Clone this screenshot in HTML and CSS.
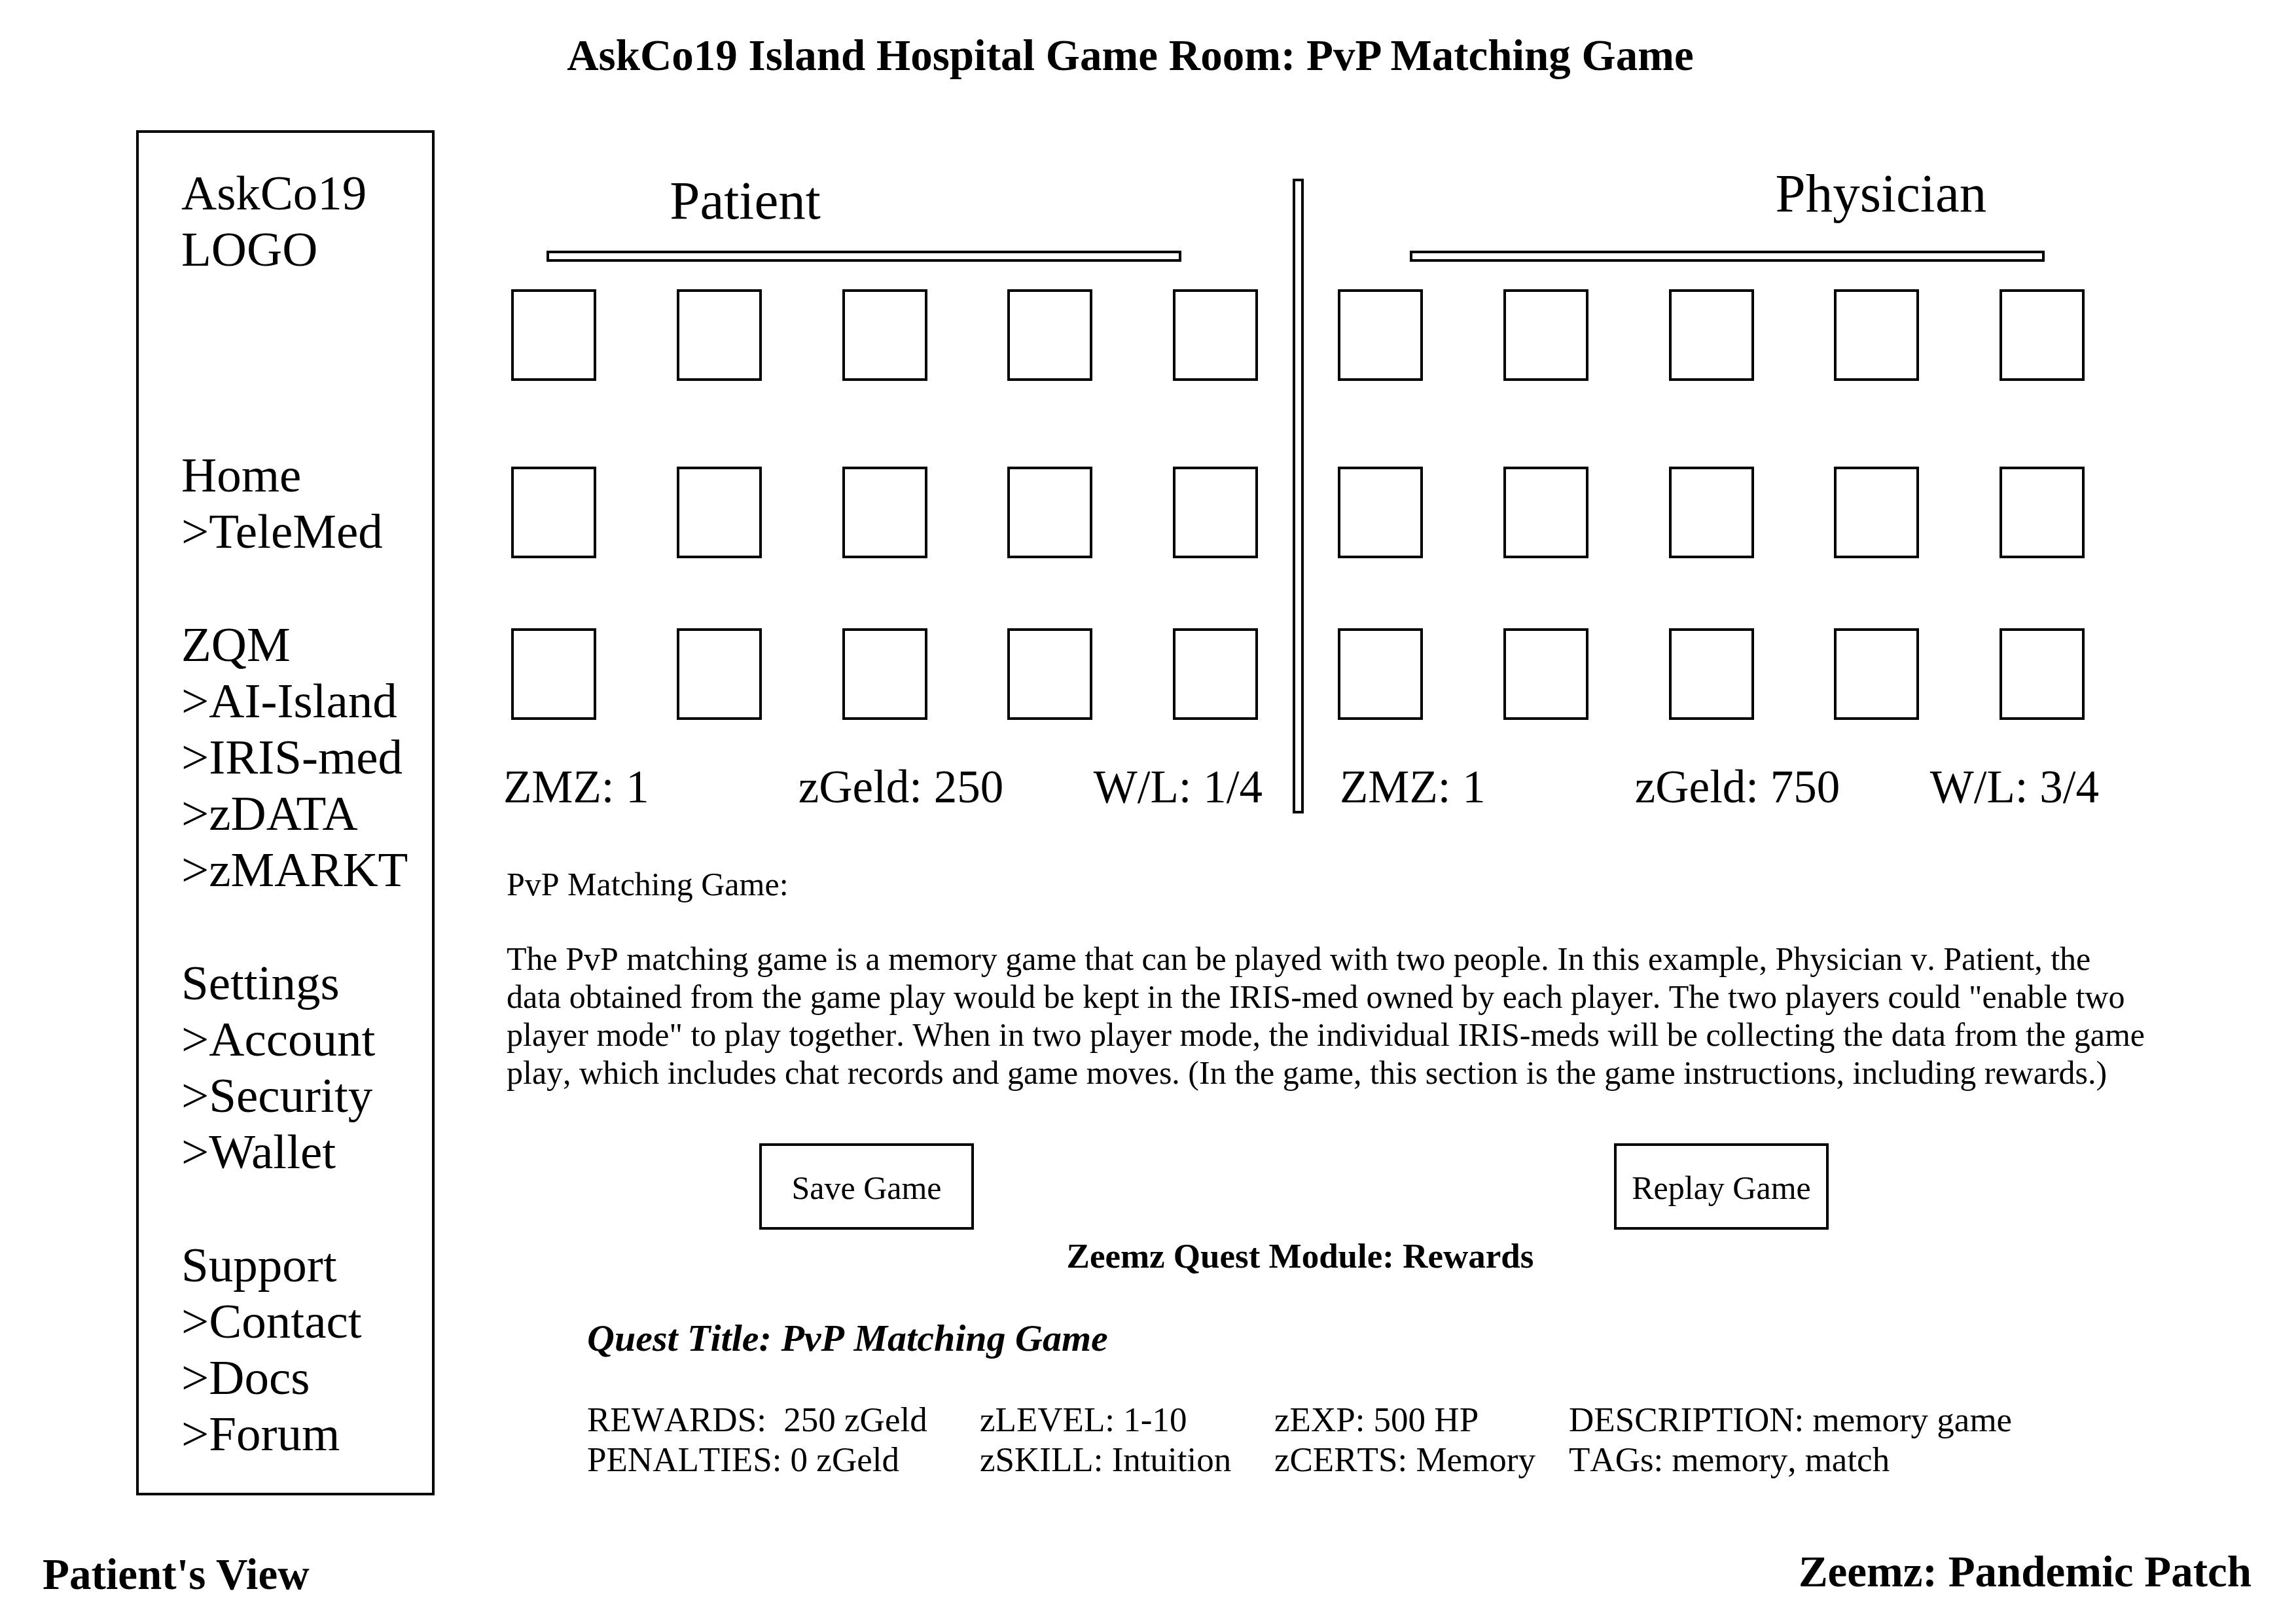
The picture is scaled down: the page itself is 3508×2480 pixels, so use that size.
FILE: index.html
```html
<!DOCTYPE html>
<html lang="en">
<head>
  <meta charset="utf-8">
  <meta name="viewport" content="width=device-width, initial-scale=1">
  <title>AskCo19 Island Hospital Game Room</title>
  <link rel="stylesheet" href="styles.css">
</head>
<body>
  <header class="page-header">
    <h1 class="page-title">AskCo19 Island Hospital Game Room: PvP Matching Game</h1>
  </header>

  <div class="layout">
    <aside class="sidebar">
      <div class="logo">AskCo19<br>LOGO</div>
      <nav class="menu">
        <ul class="menu-group">
          <li><a href="#home">Home</a></li>
          <li><a href="#telemed">&gt;TeleMed</a></li>
        </ul>
        <ul class="menu-group">
          <li><a href="#zqm">ZQM</a></li>
          <li><a href="#ai-island">&gt;AI-Island</a></li>
          <li><a href="#iris-med">&gt;IRIS-med</a></li>
          <li><a href="#zdata">&gt;zDATA</a></li>
          <li><a href="#zmarkt">&gt;zMARKT</a></li>
        </ul>
        <ul class="menu-group">
          <li><a href="#settings">Settings</a></li>
          <li><a href="#account">&gt;Account</a></li>
          <li><a href="#security">&gt;Security</a></li>
          <li><a href="#wallet">&gt;Wallet</a></li>
        </ul>
        <ul class="menu-group">
          <li><a href="#support">Support</a></li>
          <li><a href="#contact">&gt;Contact</a></li>
          <li><a href="#docs">&gt;Docs</a></li>
          <li><a href="#forum">&gt;Forum</a></li>
        </ul>
      </nav>
    </aside>

    <main class="content">
      <section class="board">
        <div class="player player-patient">
          <h2 class="player-name">Patient</h2>
          <div class="player-rule"></div>
          <div class="cards">
            <button class="card" type="button"></button>
            <button class="card" type="button"></button>
            <button class="card" type="button"></button>
            <button class="card" type="button"></button>
            <button class="card" type="button"></button>
            <button class="card" type="button"></button>
            <button class="card" type="button"></button>
            <button class="card" type="button"></button>
            <button class="card" type="button"></button>
            <button class="card" type="button"></button>
            <button class="card" type="button"></button>
            <button class="card" type="button"></button>
            <button class="card" type="button"></button>
            <button class="card" type="button"></button>
            <button class="card" type="button"></button>
          </div>
          <div class="stats">
            <span>ZMZ: 1</span>
            <span>zGeld: 250</span>
            <span>W/L: 1/4</span>
          </div>
        </div>

        <div class="divider"></div>

        <div class="player player-physician">
          <h2 class="player-name">Physician</h2>
          <div class="player-rule"></div>
          <div class="cards">
            <button class="card" type="button"></button>
            <button class="card" type="button"></button>
            <button class="card" type="button"></button>
            <button class="card" type="button"></button>
            <button class="card" type="button"></button>
            <button class="card" type="button"></button>
            <button class="card" type="button"></button>
            <button class="card" type="button"></button>
            <button class="card" type="button"></button>
            <button class="card" type="button"></button>
            <button class="card" type="button"></button>
            <button class="card" type="button"></button>
            <button class="card" type="button"></button>
            <button class="card" type="button"></button>
            <button class="card" type="button"></button>
          </div>
          <div class="stats">
            <span>ZMZ: 1</span>
            <span>zGeld: 750</span>
            <span>W/L: 3/4</span>
          </div>
        </div>
      </section>

      <section class="instructions">
        <h2 class="instructions-title">PvP Matching Game:</h2>
        <p class="instructions-text">The PvP matching game is a memory game that can be played with two people. In this example, Physician v. Patient, the data obtained from the game play would be kept in the IRIS-med owned by each player. The two players could "enable two player mode" to play together. When in two player mode, the individual IRIS-meds will be collecting the data from the game play, which includes chat records and game moves. (In the game, this section is the game instructions, including rewards.)</p>
      </section>

      <div class="actions">
        <button class="action" type="button">Save Game</button>
        <button class="action" type="button">Replay Game</button>
      </div>

      <section class="quest">
        <h2 class="quest-module">Zeemz Quest Module: Rewards</h2>
        <h3 class="quest-title">Quest Title: PvP Matching Game</h3>
        <div class="quest-details">
          <span>REWARDS:  250 zGeld</span>
          <span>zLEVEL: 1-10</span>
          <span>zEXP: 500 HP</span>
          <span>DESCRIPTION: memory game</span>
          <span>PENALTIES: 0 zGeld</span>
          <span>zSKILL: Intuition</span>
          <span>zCERTS: Memory</span>
          <span>TAGs: memory, match</span>
        </div>
      </section>
    </main>
  </div>

  <footer class="page-footer">
    <p class="view-label">Patient's View</p>
    <p class="product-label">Zeemz: Pandemic Patch</p>
  </footer>
</body>
</html>
```
FILE: styles.css
```css
* {
  box-sizing: border-box;
}

body,
h1,
h2,
h3,
p,
ul {
  margin: 0;
  padding: 0;
}

body {
  background: #fff;
  color: #000;
  font-family: "Liberation Serif", "Times New Roman", serif;
}

h2,
h3 {
  font-weight: 400;
}

/* Header and footer */

.page-header {
  padding: 46px 54px 0 0;
}

.page-title {
  font-size: 67px;
  line-height: 76px;
  text-align: center;
}

.page-footer {
  display: flex;
  justify-content: space-between;
  padding: 78px 68px 36px 65px;
  font-size: 67px;
  font-weight: 700;
  line-height: 76px;
}

.view-label {
  padding-top: 4px;
}

/* Sidebar and content columns */

.layout {
  display: grid;
  grid-template-columns: 456px 1fr;
  column-gap: 105px;
  align-items: start;
  margin-top: 77px;
  padding: 0 222px 0 208px;
}

.sidebar {
  padding: 49px 0 47px 65px;
  border: 4px solid #000;
  font-size: 75px;
  line-height: 86px;
}

.menu {
  display: flex;
  flex-direction: column;
  gap: 87px;
  margin-top: 259px;
}

.menu-group {
  list-style: none;
}

.menu a {
  display: block;
  color: inherit;
  text-decoration: none;
}

.content {
  min-width: 0;
  padding-top: 48px;
}

/* Game board */

.board {
  display: grid;
  grid-template-columns: 1fr 17px 1fr;
  column-gap: 50px;
  margin-right: 88px;
}

.divider {
  margin-top: 26px;
  border: 4px solid #000;
}

.player-name {
  height: 136px;
  font-size: 83px;
  line-height: 96px;
}

.player-patient .player-name {
  padding: 11px 0 0 22%;
}

.player-physician .player-name {
  padding-left: 58%;
}

.player-rule {
  height: 17px;
  border: 4px solid #000;
}

.player-patient .player-rule {
  margin: 0 120px 0 66px;
}

.player-physician .player-rule {
  margin: 0 74px 0 112px;
}

.cards {
  display: grid;
  grid-template-columns: repeat(5, 130px);
  grid-template-rows: 271px 247px 140px;
  justify-content: space-between;
  align-items: start;
  margin-top: 42px;
}

.player-patient .cards {
  padding: 0 3px 0 12px;
}

.player-physician .cards {
  padding: 0 13px 0 2px;
}

.card {
  height: 140px;
  padding: 0;
  border: 4px solid #000;
  border-radius: 0;
  background: #fff;
}

.stats {
  display: grid;
  grid-template-columns: 39% 39% 1fr;
  margin-top: 61px;
  font-size: 71px;
  line-height: 82px;
  white-space: nowrap;
}

.player-physician .stats {
  margin-right: -5px;
  margin-left: 5px;
}

/* Instructions */

.instructions {
  margin-top: 79px;
  padding-left: 5px;
  font-size: 50px;
  font-kerning: none;
  line-height: 58px;
}

.instructions-title {
  font-size: 50px;
}

.instructions-text {
  margin-top: 56px;
}

.actions {
  display: flex;
  justify-content: space-between;
  margin-top: 79px;
  padding: 0 492px 0 391px;
}

.action {
  width: 328px;
  height: 132px;
  padding: 4px 0 0;
  border: 4px solid #000;
  border-radius: 0;
  background: #fff;
  color: inherit;
  font-family: inherit;
  font-size: 50px;
  line-height: 58px;
}

/* Quest rewards */

.quest-module {
  margin-top: 10px;
  padding-right: 82px;
  font-size: 53px;
  font-weight: 700;
  line-height: 61px;
  text-align: center;
}

.quest-title {
  margin-top: 61px;
  padding-left: 128px;
  font-size: 58px;
  font-kerning: none;
  font-style: italic;
  font-weight: 700;
  line-height: 67px;
}

.quest-details {
  display: grid;
  grid-template-columns: 600px 450px 450px 1fr;
  margin-top: 61px;
  padding-left: 128px;
  font-size: 53px;
  font-kerning: none;
  line-height: 61px;
  white-space: pre;
}
```
